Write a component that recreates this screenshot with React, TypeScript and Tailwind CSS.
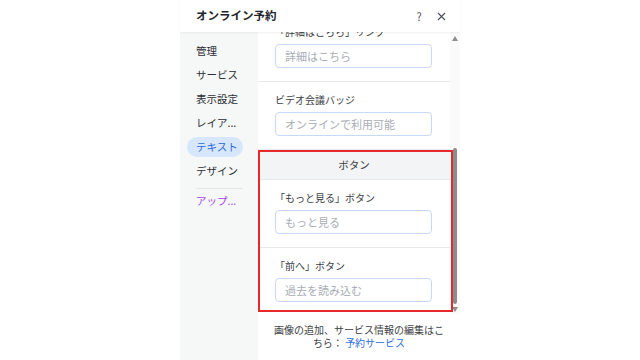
import React from "react";

const font = { fontFamily: '"Noto Sans CJK JP", "Noto Sans", sans-serif' };

function Field({ label, placeholder }: { label: string; placeholder: string }) {
  return (
    <div className="pl-[17px] pr-[18px] pt-[11px] pb-[13px] border-b border-[#e6e8eb]">
      <div className="h-[14px] leading-[14px] text-[10px] text-[#3b3e44]">{label}</div>
      <div className="mt-[5px] h-[24px] rounded-[4px] border border-[#c6d9f7] bg-white flex items-center pl-[9px] text-[11px] text-[#a9adb4]">
        {placeholder}
      </div>
    </div>
  );
}

const navItems = ["管理", "サービス", "表示設定", "レイア...", "テキスト", "デザイン"];

export default function App() {
  return (
    <div className="w-[640px] h-[360px] bg-white overflow-hidden" style={font}>
      <div className="ml-[180px] w-[280px] h-[360px] flex flex-col">
        {/* header */}
        <div className="h-[32px] flex items-center pl-[16px] pr-[14px] bg-white shadow-[0_1px_2px_rgba(0,0,0,0.06)] relative z-10">
          <div className="text-[11.5px] font-bold text-[#20232a] flex-1">オンライン予約</div>
          <div className="text-[11px] text-[#4a4e5a] w-[10px] text-center">?</div>
          <div className="ml-[13px] text-[#4a4e5a]">
            <svg width="9" height="9" viewBox="0 0 9 9">
              <path d="M1 1L8 8M8 1L1 8" stroke="#4a4e5a" strokeWidth="1.1" />
            </svg>
          </div>
        </div>
        <div className="flex flex-1 min-h-0">
          {/* sidebar */}
          <div className="w-[78px] bg-[#f6f7f7] pt-[7px] flex flex-col">
            {navItems.map((n) => (
              <div key={n} className="h-[24px] flex items-center pl-[7px]">
                <div
                  className={
                    "h-[20px] w-[56px] rounded-full flex items-center pl-[9px] text-[10.5px] whitespace-nowrap " +
                    (n === "テキスト" ? "bg-[#d6e6fd] text-[#2d6ad8]" : "text-[#2b2e34]")
                  }
                >
                  {n}
                </div>
              </div>
            ))}
            <div className="ml-[16px] mr-[15px] mt-[5px] h-px bg-[#e3e5e8]" />
            <div className="h-[24px] flex items-center pl-[16px] text-[10.5px] text-[#a348e6] whitespace-nowrap">
              アップ...
            </div>
          </div>
          {/* main */}
          <div className="flex-1 flex flex-col min-w-0">
            <div className="h-[282px] flex relative">
              <div className="flex-1 overflow-hidden">
                <div className="mt-[-18px]">
                  <Field label="「詳細はこちら」リンク" placeholder="詳細はこちら" />
                  <Field label="ビデオ会議バッジ" placeholder="オンラインで利用可能" />
                  <div className="h-[30px] bg-[#f3f4f5] border-b border-[#e6e8eb] flex items-center justify-center text-[10.5px] text-[#3b3e44]">
                    ボタン
                  </div>
                  <Field label="「もっと見る」ボタン" placeholder="もっと見る" />
                  <Field label="「前へ」ボタン" placeholder="過去を読み込む" />
                </div>
              </div>
              {/* scrollbar */}
              <div className="w-[10px] bg-[#fafafa] flex flex-col items-center">
                <svg width="6" height="5" viewBox="0 0 6 5" className="mt-[4px]">
                  <path d="M3 0L6 5H0Z" fill="#8e8e8e" />
                </svg>
                <div className="flex-1 w-full flex flex-col items-center">
                  <div className="mt-[107px] w-[4px] h-[156px] rounded-full bg-[#8c8c8c]" />
                </div>
                <svg width="6" height="5" viewBox="0 0 6 5" className="mb-[2px]">
                  <path d="M0 0H6L3 5Z" fill="#8e8e8e" />
                </svg>
              </div>
              {/* highlight overlay */}
              <div className="absolute left-0 top-[118px] w-[195px] h-[162px] border-2 border-[#e8292b] pointer-events-none" />
            </div>
            <div className="flex-1 bg-white pt-[9px] text-center text-[10px] leading-[13px] text-[#3b3e44] px-[14px]">
              画像の追加、サービス情報の編集はこちら： <span className="text-[#2f6fdf]">予約サービス</span>
            </div>
          </div>
        </div>
      </div>
    </div>
  );
}
